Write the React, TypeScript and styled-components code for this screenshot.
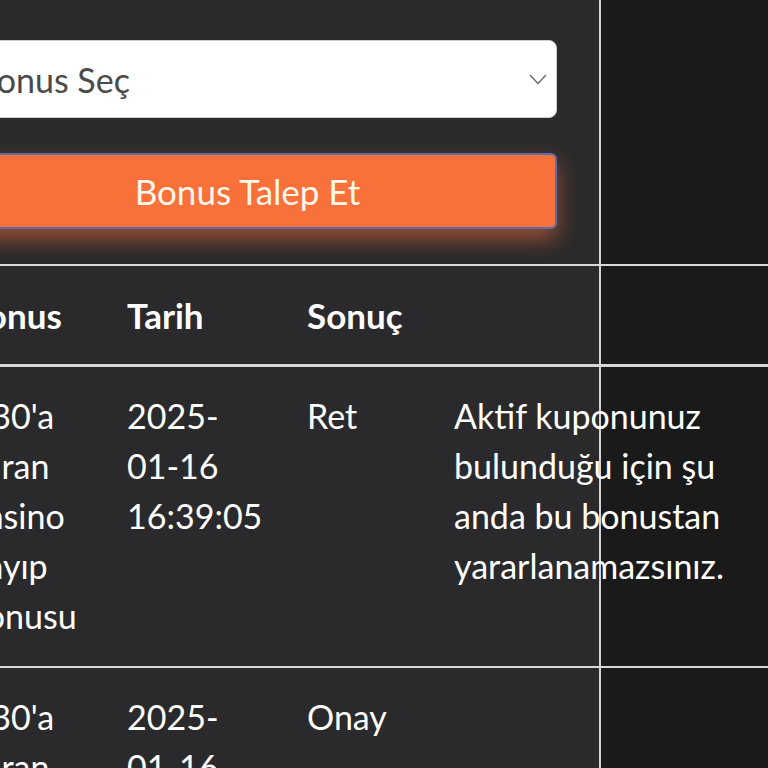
import React from "react";
import styled, { createGlobalStyle } from "styled-components";

const GlobalStyle = createGlobalStyle`
  html, body {
    margin: 0;
    padding: 0;
    background: #1a1a1a;
    overflow: hidden;
  }
  * {
    box-sizing: border-box;
  }
`;

const rows = [
  {
    bonus: "%30'a Varan Casino Kayıp Bonusu",
    date: "2025-01-16 16:39:05",
    result: "Ret",
    note: "Aktif kuponunuz bulunduğu için şu anda bu bonustan yararlanamazsınız.",
  },
  {
    bonus: "%30'a Varan Casino Kayıp Bonusu",
    date: "2025-01-16 16:39:05",
    result: "Onay",
    note: "",
  },
];

export default function App() {
  return (
    <Page>
      <GlobalStyle />
      <Panel>
        <Form>
          <SelectBox>
            <span>Bonus Seç</span>
            <svg width="18" height="11" viewBox="0 0 18 11">
              <polyline points="1,1 9,9.5 17,1" fill="none" stroke="#666" strokeWidth="1.3" />
            </svg>
          </SelectBox>
          <ClaimButton>Bonus Talep Et</ClaimButton>
        </Form>
        <Table>
          <colgroup>
            <col style={{ width: 163 }} />
            <col style={{ width: 180 }} />
            <col style={{ width: 147 }} />
            <col style={{ width: 340 }} />
          </colgroup>
          <thead>
            <tr>
              <Th>Bonus</Th>
              <Th>Tarih</Th>
              <Th>Sonuç</Th>
              <Th></Th>
            </tr>
          </thead>
          <tbody>
            {rows.map((row, i) => (
              <tr key={i}>
                <Td>{row.bonus}</Td>
                <Td>{row.date}</Td>
                <Td>{row.result}</Td>
                <Td>{row.note}</Td>
              </tr>
            ))}
          </tbody>
        </Table>
      </Panel>
    </Page>
  );
}

const Page = styled.div`
  width: 100vw;
  height: 100vh;
  overflow: hidden;
  background: #1a1a1a;
  font-family: Lato, "Noto Sans", sans-serif;
`;

const Panel = styled.div`
  margin-left: -62px;
  width: 663px;
  min-height: 100vh;
  background: #2a2a2c;
  border-right: 2px solid #d4d4d4;
  padding-top: 40px;
`;

const Form = styled.div`
  display: flex;
  flex-direction: column;
  gap: 35px;
  padding-right: 42px;
`;

const SelectBox = styled.div`
  height: 78px;
  background: #ffffff;
  border: 1px solid #d0d0d0;
  border-radius: 8px;
  display: flex;
  align-items: center;
  justify-content: space-between;
  padding: 0 9px 0 36px;
  font-size: 34px;
  color: #4a4a4a;
`;

const ClaimButton = styled.button`
  height: 76px;
  background: #f8703a;
  border: 2px solid #5a6db0;
  border-radius: 6px;
  color: #fff7ea;
  font-family: Lato, "Noto Sans", sans-serif;
  font-size: 35px;
  box-shadow: 0 10px 22px rgba(248, 112, 58, 0.55);
  cursor: pointer;
`;

const Table = styled.table`
  margin-top: 35px;
  width: 830px;
  table-layout: fixed;
  border-collapse: collapse;
  border-top: 2px solid #d8d8d8;
  color: #ffffff;

  thead tr {
    border-bottom: 3px solid #d8d8d8;
  }
  tbody tr {
    border-bottom: 2px solid #d8d8d8;
  }
`;

const Th = styled.th`
  height: 100px;
  padding: 0 16px 0 26px;
  text-align: left;
  vertical-align: middle;
  font-size: 35px;
  font-weight: 700;
`;

const Td = styled.td`
  padding: 24px 16px 25px 26px;
  vertical-align: top;
  font-size: 34px;
  line-height: 50px;
  font-weight: 400;
`;
